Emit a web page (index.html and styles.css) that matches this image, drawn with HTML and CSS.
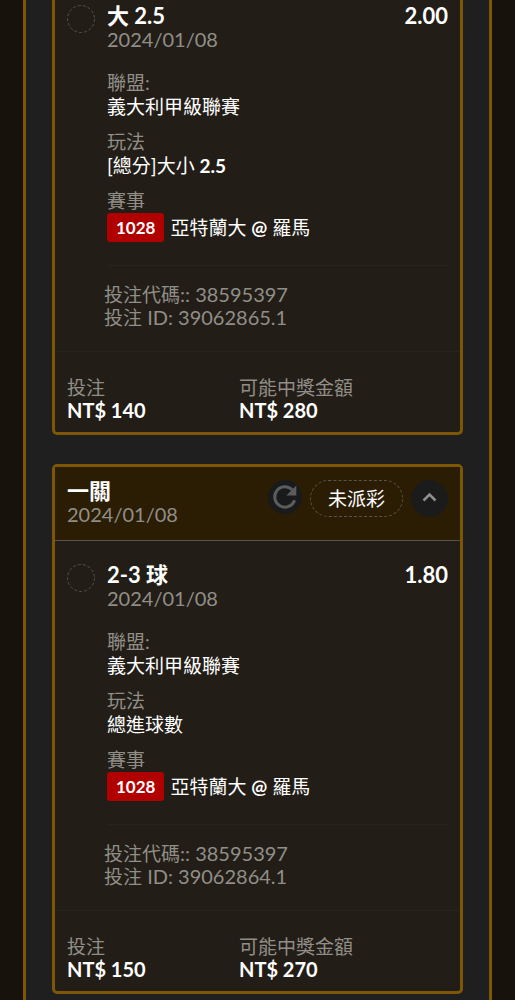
FILE: index.html
```html
<!DOCTYPE html>
<html lang="zh-Hant">
<head>
<meta charset="utf-8">
<meta name="viewport" content="width=device-width, initial-scale=1">
<title>投注</title>
<link rel="stylesheet" href="styles.css">
</head>
<body>
<main class="panel">
  <article class="card card-continued">
    <section class="pick">
      <svg class="status" viewBox="0 0 28 28" aria-hidden="true"><circle cx="14" cy="14" r="13.5"/></svg>
      <div class="pick-main">
        <div class="pick-head">
          <h2 class="title">大 2.5</h2>
          <span class="odds">2.00</span>
        </div>
        <time class="date">2024/01/08</time>
        <dl class="details">
          <div><dt>聯盟:</dt><dd>義大利甲級聯賽</dd></div>
          <div><dt>玩法</dt><dd>[總分]大小 <b>2.5</b></dd></div>
          <div><dt>賽事</dt><dd class="match"><span class="badge">1028</span><span>亞特蘭大 <b>@</b> 羅馬</span></dd></div>
        </dl>
        <div class="codes">
          <p>投注代碼<span class="latin">:: 38595397</span></p>
          <p>投注<span class="latin"> ID: 39062865.1</span></p>
        </div>
      </div>
    </section>
    <dl class="totals">
      <div><dt>投注</dt><dd>NT$ 140</dd></div>
      <div><dt>可能中獎金額</dt><dd>NT$ 280</dd></div>
    </dl>
  </article>

  <article class="card">
    <header class="card-head">
      <div class="card-title">
        <h2 class="title">一關</h2>
        <time class="date">2024/01/08</time>
      </div>
      <div class="actions">
        <button class="round refresh" type="button" aria-label="重新整理">
          <svg viewBox="0 0 34 34" width="34" height="34" aria-hidden="true">
            <path class="stroke-thick" d="M26.6 20.2A10.2 10.2 0 1 1 24.2 9.8"/>
            <path class="solid" d="M28.3 5.5V15.5H18.3Z"/>
          </svg>
        </button>
        <span class="pill">未派彩</span>
        <button class="round toggle" type="button" aria-label="收合" aria-expanded="true">
          <svg viewBox="0 0 37 37" width="37" height="37" aria-hidden="true">
            <path class="stroke" d="M12.5 20.5L18.5 14.5L24.5 20.5"/>
          </svg>
        </button>
      </div>
    </header>
    <section class="pick">
      <svg class="status" viewBox="0 0 28 28" aria-hidden="true"><circle cx="14" cy="14" r="13.5"/></svg>
      <div class="pick-main">
        <div class="pick-head">
          <h3 class="title">2-3 球</h3>
          <span class="odds">1.80</span>
        </div>
        <time class="date">2024/01/08</time>
        <dl class="details">
          <div><dt>聯盟:</dt><dd>義大利甲級聯賽</dd></div>
          <div><dt>玩法</dt><dd>總進球數</dd></div>
          <div><dt>賽事</dt><dd class="match"><span class="badge">1028</span><span>亞特蘭大 <b>@</b> 羅馬</span></dd></div>
        </dl>
        <div class="codes">
          <p>投注代碼<span class="latin">:: 38595397</span></p>
          <p>投注<span class="latin"> ID: 39062864.1</span></p>
        </div>
      </div>
    </section>
    <dl class="totals">
      <div><dt>投注</dt><dd>NT$ 150</dd></div>
      <div><dt>可能中獎金額</dt><dd>NT$ 270</dd></div>
    </dl>
  </article>
</main>
</body>
</html>
```
FILE: styles.css
```css
* {
  box-sizing: border-box;
  margin: 0;
  padding: 0;
}

body {
  padding: 0 23px;
  background: #17130c;
  color: #fff;
  font-family: Lato, "Noto Sans CJK TC", sans-serif;
  font-size: 19px;
  line-height: 24px;
}

.panel {
  display: flex;
  flex-direction: column;
  gap: 29px;
  min-height: 100vh;
  padding: 0 26px 6px;
  border: solid #7d5606;
  border-width: 0 3px;
  background: #1f1f1f;
}

.card {
  border: 3px solid #7d5606;
  border-radius: 5px;
  background: #221e17;
}

.card-continued {
  border-top: 0;
  border-top-left-radius: 0;
  border-top-right-radius: 0;
}

.card-head {
  display: flex;
  justify-content: space-between;
  align-items: flex-start;
  padding: 12px 12px 14px;
  border-bottom: 1px solid #57534b;
  background: #2a1d04;
}

.card-title {
  display: flex;
  flex-direction: column;
}

.title,
.odds {
  font-size: 22px;
  font-weight: 700;
  line-height: 24px;
}

.date {
  display: block;
  color: #918e88;
  font-size: 20px;
  line-height: 23px;
}

.actions {
  display: flex;
  align-items: flex-start;
  gap: 8px;
  padding-top: 1px;
}

.round {
  display: flex;
  border: 0;
  border-radius: 50%;
  background: #1b1b1b;
  color: #8f8f8f;
  cursor: pointer;
}

.refresh {
  background: #191a1b;
  color: #5c5c5c;
}

.stroke,
.stroke-thick {
  fill: none;
  stroke: currentColor;
  stroke-width: 2.5;
}

.stroke-thick {
  stroke-width: 3;
}

.solid {
  fill: currentColor;
}

.pill {
  padding: 0 17px;
  border: 1px dashed #5a554b;
  border-radius: 19px;
  line-height: 35px;
}

.pick {
  display: flex;
  gap: 12px;
  padding: 22px 12px;
  border-bottom: 1px solid #26221c;
}

.card-continued .pick {
  padding-top: 4px;
}

.status {
  flex: none;
  width: 28px;
  height: 28px;
  margin-top: 1px;
  fill: none;
  stroke: #55524c;
  stroke-dasharray: 3 2;
}

.pick-main {
  flex: 1;
}

.pick-head {
  display: flex;
  justify-content: space-between;
}

.details {
  display: flex;
  flex-direction: column;
  gap: 11px;
  margin-top: 20px;
  padding-bottom: 23px;
  border-bottom: 1px solid #27241e;
}

.details dt,
.codes,
.totals dt {
  color: #918e88;
}

.match {
  display: flex;
  align-items: center;
  gap: 6px;
}

.badge {
  padding: 0 9px;
  border-radius: 3px;
  background: #b00000;
  font-size: 17px;
  font-weight: 700;
  line-height: 29px;
}

.codes {
  margin: 17px 0 0 -3px;
  line-height: 22px;
}

.latin {
  font-size: 20px;
  white-space: pre;
}

.totals {
  display: grid;
  grid-template-columns: 172fr 209fr;
  padding: 25px 12px 11px;
  line-height: 22px;
}

.totals dd {
  font-size: 20px;
  font-weight: 700;
}
```
